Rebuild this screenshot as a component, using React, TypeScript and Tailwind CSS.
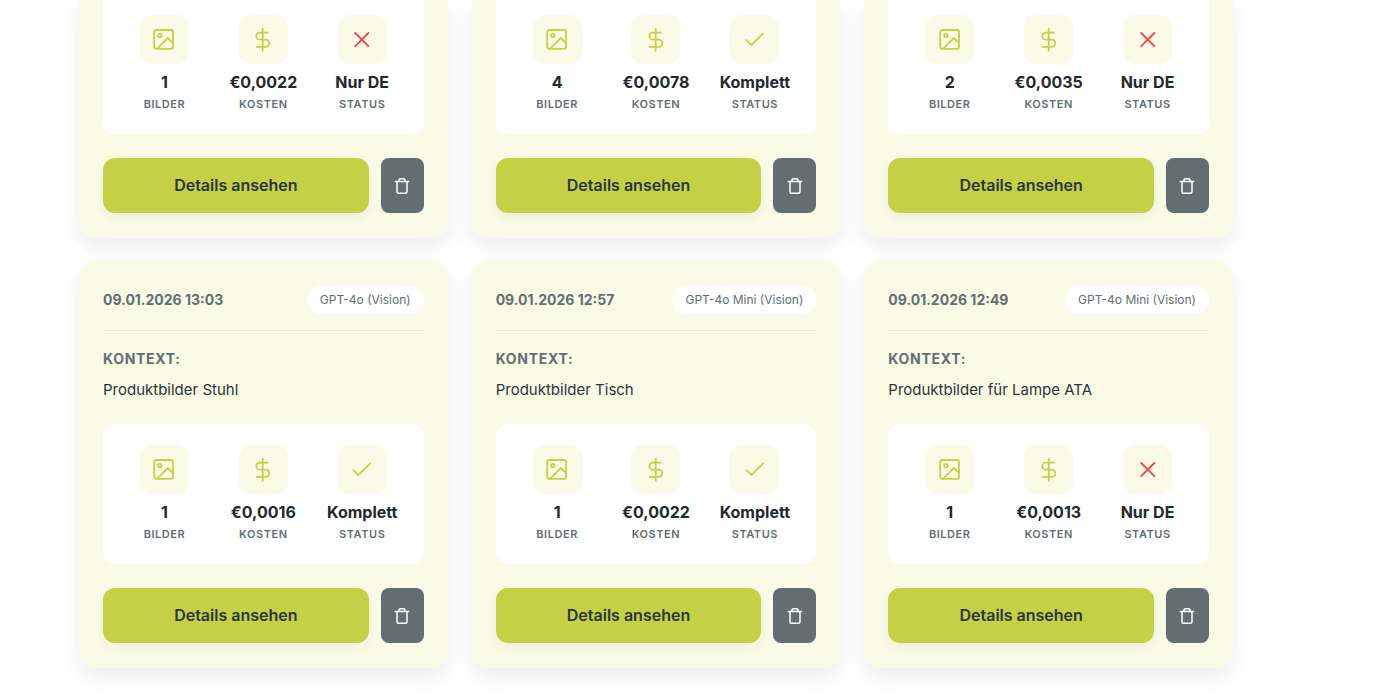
import type { ReactNode } from 'react';

type Stats = { images: number; cost: string; complete: boolean };
type Analysis = Stats & { date: string; model: string; context: string };

const previous: Stats[] = [
  { images: 1, cost: '€0,0022', complete: false },
  { images: 4, cost: '€0,0078', complete: true },
  { images: 2, cost: '€0,0035', complete: false },
];

const analyses: Analysis[] = [
  { date: '09.01.2026 13:03', model: 'GPT-4o (Vision)', context: 'Produktbilder Stuhl', images: 1, cost: '€0,0016', complete: true },
  { date: '09.01.2026 12:57', model: 'GPT-4o Mini (Vision)', context: 'Produktbilder Tisch', images: 1, cost: '€0,0022', complete: true },
  { date: '09.01.2026 12:49', model: 'GPT-4o Mini (Vision)', context: 'Produktbilder für Lampe ATA', images: 1, cost: '€0,0013', complete: false },
];

function Icon({ children, className }: { children: ReactNode; className: string }) {
  return (
    <svg viewBox="0 0 24 24" fill="none" stroke="currentColor" strokeWidth="1.8" strokeLinecap="round" strokeLinejoin="round" aria-hidden="true" className={className}>
      {children}
    </svg>
  );
}

const ImageIcon = () => (
  <Icon className="size-6 text-[#c5d144]">
    <rect x="2.2" y="2" width="18.8" height="18.8" rx="2" />
    <circle cx="7.8" cy="7.6" r="1.7" />
    <path d="M5.2 20.6 15.8 10l5.2 5.2" />
  </Icon>
);

const DollarIcon = () => (
  <Icon className="size-6 text-[#c5d144]">
    <path d="M11.7 .6v22.2M16.9 4.6H8.9a3.5 3.5 0 0 0 0 7.1h5.8a3.6 3.6 0 0 1 0 7.2H5.6" />
  </Icon>
);

const CheckIcon = () => (
  <Icon className="size-6 text-[#c5d144]">
    <path d="m3.4 12.2 5 5L20.2 5.4" />
  </Icon>
);

const CrossIcon = () => (
  <Icon className="size-6 text-[#f0444a]">
    <path d="m5.2 5 13.2 13.2M18.4 5 5.2 18.2" />
  </Icon>
);

function Stat({ icon, value, label }: { icon: ReactNode; value: ReactNode; label: string }) {
  return (
    <div className="flex flex-col items-center">
      <div className="flex size-[49px] items-center justify-center rounded-xl bg-[#fafbe6]">{icon}</div>
      <div className="mt-2 text-base leading-5 font-bold whitespace-nowrap text-[#22282b]">{value}</div>
      <div className="mt-1 text-[11px] leading-4 font-semibold tracking-wider text-[#636e72] uppercase">{label}</div>
    </div>
  );
}

function StatGrid({ images, cost, complete, clipped = false }: Stats & { clipped?: boolean }) {
  return (
    <div className={`grid grid-cols-3 gap-4 bg-white px-5 pb-[22px] ${clipped ? 'rounded-t-sm rounded-b-xl pt-[15px]' : 'mt-[22px] rounded-xl pt-[21px]'}`}>
      <Stat icon={<ImageIcon />} value={images} label="Bilder" />
      <Stat icon={<DollarIcon />} value={cost} label="Kosten" />
      <Stat icon={complete ? <CheckIcon /> : <CrossIcon />} value={complete ? 'Komplett' : 'Nur DE'} label="Status" />
    </div>
  );
}

function Actions() {
  return (
    <div className="mt-6 flex gap-3">
      <button type="button" className="h-[55px] flex-1 rounded-xl bg-[#c5d144] pb-0.5 text-base font-semibold text-[#2d3436] shadow-[0_4px_12px_rgba(0,0,0,0.05)]">
        Details ansehen
      </button>
      <button type="button" aria-label="Löschen" className="flex h-[55px] w-[43px] items-center justify-center rounded-lg bg-[#636e72] text-white">
        <Icon className="size-5">
          <path d="M4 6.6h16M6 6.6v12.2a2 2 0 0 0 2 2h8a2 2 0 0 0 2-2V6.6M8.4 6.2V5a1.8 1.8 0 0 1 1.8-1.8h3.6A1.8 1.8 0 0 1 15.6 5v1.2" />
        </Icon>
      </button>
    </div>
  );
}

export default function App() {
  return (
    <main className="grid grid-cols-3 gap-6 overflow-hidden bg-white pr-[167px] pb-8 pl-[79px] font-[Inter,'Liberation_Sans',sans-serif]">
      {previous.map((stats) => (
        <article key={stats.cost} className="rounded-b-2xl bg-[#fafbe6] px-6 pb-[25px] shadow-[0_8px_24px_rgba(0,0,0,0.08)]">
          <StatGrid {...stats} clipped />
          <Actions />
        </article>
      ))}
      {analyses.map(({ date, model, context, ...stats }) => (
        <article key={date} className="rounded-2xl bg-[#fafbe6] px-6 pt-6 pb-[25px] shadow-[0_8px_24px_rgba(0,0,0,0.08)]">
          <header className="flex items-center justify-between border-b border-[#e7e8e6] pb-4">
            <time className="text-sm font-bold text-[#636e72]">{date}</time>
            <span className="rounded-full bg-white px-[13px] text-xs leading-7 text-[#636e72]">{model}</span>
          </header>
          <h3 className="mt-4 text-sm leading-6 font-bold tracking-wider text-[#636e72] uppercase">Kontext:</h3>
          <p className="mt-1.5 text-[15px] leading-[25px] text-[#2d3436]">{context}</p>
          <StatGrid {...stats} />
          <Actions />
        </article>
      ))}
    </main>
  );
}
